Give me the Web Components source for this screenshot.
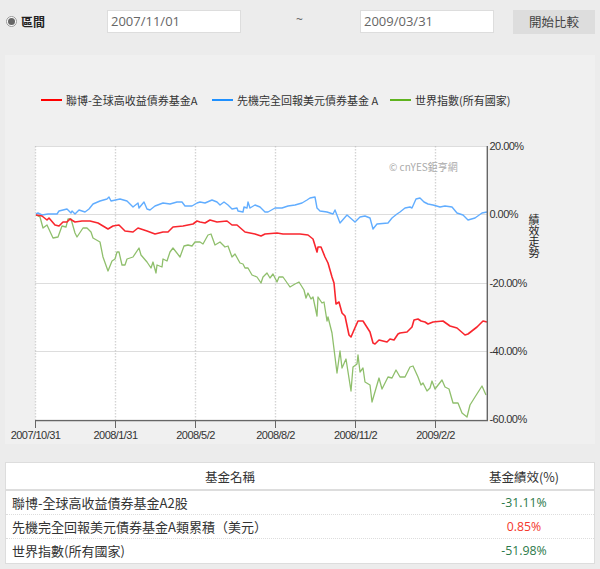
<!DOCTYPE html>
<html lang="zh-Hant"><head><meta charset="utf-8"><style>
html,body{margin:0;padding:0;background:#ececec;height:569px;overflow:hidden}
body{font-family:"Noto Sans CJK TC","Noto Sans",sans-serif;color:#333}
</style></head><body>
<fund-compare></fund-compare>
<script>
const FONT='"Open Sans","Noto Sans CJK TC",sans-serif';
class RangeBar extends HTMLElement{constructor(){super();this.attachShadow({mode:'open'}).innerHTML=`<style>
:host{display:grid;grid-template-columns:100px 136px 1fr 136px 101px;height:24px;padding:10px 5px 21px 5px;align-items:center;font:13px ${FONT};color:#666}
.r{display:flex;align-items:center;gap:4px;align-self:start;padding-top:3px;color:#222;font:bold 12px "Noto Sans CJK TC",sans-serif}
.dot{box-sizing:border-box;width:11px;height:11px;border-radius:50%;border:1px solid #999;background:#fff;display:flex;align-items:center;justify-content:center;margin-left:1px}
.dot i{width:7px;height:7px;border-radius:50%;background:#666}
.in{box-sizing:border-box;height:23px;width:134px;margin-left:2px;background:#fff;border:1px solid #ddd;padding-left:3px;line-height:21px;align-self:start}
.t{text-align:center;font-size:12px;align-self:start;line-height:20px}
.b{box-sizing:border-box;height:24px;width:82px;margin-left:19px;background:#ddd;text-align:center;font:12.5px/24px "Noto Sans CJK TC",sans-serif;color:#444}
</style><div class="r"><span class="dot"><i></i></span>區間</div><div class="in">2007/11/01</div><div class="t">~</div><div class="in">2009/03/31</div><div class="b">開始比較</div>`}}
customElements.define('range-bar',RangeBar);

class ChartLegend extends HTMLElement{constructor(){super();this.attachShadow({mode:'open'}).innerHTML=`<style>
:host{display:flex;align-items:center;height:16px;padding:37px 0 0 36px;font:11px/16px "Noto Sans CJK TC",sans-serif;color:#333;white-space:nowrap}
i{display:block;width:21px;height:1.5px;margin-right:4px}
span{display:block}
</style><i style="background:#f00"></i><span style="width:146px">聯博-全球高收益債券基金A</span><i style="background:#1e90ff"></i><span style="width:153px">先機完全回報美元債券基金 A</span><i style="background:#5fb31e"></i><span>世界指數(所有國家)</span>`}}
customElements.define('chart-legend',ChartLegend);

const BLUE="36,214 38,213 42,215 48,214 57,214 59,211 67,209 71,213 72,211 75,214 79,210 85,212 89,209 93,204 100,201 107,199 109,197 111,201 120,199 127,201 133,207 138,203 139,208 144,202 147,209 150,210 155,206 163,203 170,204 177,202 182,202 185,206 192,206 197,203 200,202 205,203 212,200 217,202 220,205 224,202 228,205 232,209 237,208 238,211 243,212 244,207 247,208 248,202 250,208 255,205 260,207 265,212 268,212 275,208 282,208 288,206 295,205 302,203 307,200 310,198 315,197 317,208 320,211 327,212 333,214 335,210 340,223 347,215 355,222 360,217 365,216 370,218 373,229 377,224 388,223 392,218 397,214 400,212 405,208 410,207 412,208 416,199 420,198 424,202 428,204 433,205 440,207 445,206 452,207 457,213 463,215 468,220 475,218 482,213 487,212";
const RED="36,215 42,216 47,220 49,218 55,225 59,226 63,222 67,222 70,219 75,222 82,221 90,221 98,223 108,229 113,226 119,225 125,231 133,232 138,228 147,231 155,234 163,232 168,232 173,227 183,226 193,224 197,221 200,222 205,223 210,220 217,222 227,221 232,225 237,225 245,232 250,233 255,234 261,236 265,234 277,233 283,234 300,234 308,235 313,239 317,252 318,247 321,247 325,257 328,263 332,277 334,283 336,304 339,302 342,313 345,316 349,335 351,337 354,330 358,321 363,321 370,332 373,343 375,344 379,340 387,342 390,339 394,340 398,334 400,333 407,332 412,327 414,320 418,319 421,321 425,322 428,324 433,322 443,321 450,326 457,328 465,335 468,334 477,327 483,321 487,322";
const GREEN="36,215 40,217 43,228 47,225 53,238 58,237 62,226 66,227 68,219 71,219 75,233 77,237 83,228 87,228 91,232 93,238 100,242 103,257 108,271 112,261 115,259 117,252 119,252 122,265 125,265 127,259 133,257 139,248 141,255 147,262 151,268 153,262 156,273 157,265 162,267 163,259 167,261 170,252 173,248 180,257 184,246 188,245 192,246 195,242 200,242 203,244 208,235 211,234 215,245 220,242 225,247 228,246 232,257 235,254 240,263 243,264 245,268 248,268 252,275 257,277 261,283 263,277 267,273 270,278 273,274 277,282 279,277 283,277 290,287 295,284 299,282 304,290 306,298 308,293 311,299 313,297 317,316 318,297 322,303 324,302 327,321 328,317 332,333 337,373 340,351 342,368 346,359 351,391 353,367 357,364 358,355 360,372 363,368 365,382 370,385 372,402 379,378 382,389 388,377 392,378 396,370 400,377 405,377 410,367 413,366 418,377 421,385 423,383 427,391 430,388 432,381 435,389 442,380 445,387 449,389 453,403 458,403 462,413 467,417 470,405 475,397 482,386 486,395";

class TrendChart extends HTMLElement{constructor(){super();
const xs=[35.5,115.5,195.5,275.5,355.5,435.5], ys=[146.5,214.5,283.5,351.5,420];
const xl=['2007/10/31','2008/1/31','2008/5/2','2008/8/2','2008/11/2','2009/2/2'];
const yl=['20.00%','0.00%','-20.00%','-40.00%','-60.00%'];
let s='';
s+=`<rect x="35.5" y="146" width="452" height="274.5" fill="#fff"/>`;
xs.forEach(x=>s+=`<line x1="${x}" x2="${x}" y1="146" y2="420" class="v"/>`);
ys.forEach(y=>s+=`<line x1="35.5" x2="487" y1="${y}" y2="${y}" class="g"/>`);
s+=`<text x="389" y="171" class="w">© cnYES鉅亨網</text>`;
[['#61adff',BLUE,1.4],['#8fbf6c',GREEN,1.3],['#f9262e',RED,1.6]].forEach(([c,p,w])=>s+=`<polyline points="${p}" fill="none" stroke="${c}" stroke-width="${w}" stroke-linejoin="round"/>`);
s+=`<path d="M487.3 146V420.6H35" fill="none" stroke="#666" stroke-width="1.4"/>`;
xs.forEach(x=>s+=`<line x1="${x}" x2="${x}" y1="420" y2="428" stroke="#666"/>`);
xl.forEach((t,i)=>s+=`<text x="${xs[i]}" y="439" text-anchor="middle" class="a">${t}</text>`);
yl.forEach((t,i)=>s+=`<text x="489.5" y="${ys[i]+3}" class="a">${t}</text>`);
s+=`<text x="534" y="214" class="c">績效走勢</text>`;
this.attachShadow({mode:'open'}).innerHTML=`<style>
:host{display:block;height:336px}
svg{display:block;margin-left:-5px}
.g{stroke:#bbb;stroke-width:1;stroke-dasharray:1 1}
.v{stroke:#d4d4d4;stroke-width:1.4;stroke-dasharray:1.5 1.5}
.a{font:11px "Liberation Sans",sans-serif;letter-spacing:-.55px;fill:#333}
.w{font:10px "Noto Sans CJK TC",sans-serif;fill:#aaa}
.c{font:11px "Noto Sans CJK TC",sans-serif;fill:#222;writing-mode:vertical-rl;text-orientation:upright}
</style><svg width="600" height="336" viewBox="0 108 600 336">${s}</svg>`}}
customElements.define('trend-chart',TrendChart);

class ChartPanel extends HTMLElement{constructor(){super();this.attachShadow({mode:'open'}).innerHTML=`<style>
:host{display:block;margin:0 5px;height:389px;background:#f0f0f0}
</style><slot></slot>`}}
customElements.define('chart-panel',ChartPanel);

class FundRow extends HTMLElement{constructor(){super();this.attachShadow({mode:'open'}).innerHTML=`<style>
:host{display:grid;grid-template-columns:1fr 140px;height:24px;box-sizing:border-box;font:13px/23px "Noto Sans CJK TC",sans-serif;color:#333;border-bottom:1px dotted #ddd;padding-left:6px}
:host([last]){border-bottom:0}
.v{text-align:center;font-family:${FONT};font-size:12.3px}
</style><div><slot></slot></div><div class="v" style="color:${this.getAttribute('color')}">${this.getAttribute('value')}</div>`}}
customElements.define('fund-row',FundRow);

class FundTable extends HTMLElement{constructor(){super();this.attachShadow({mode:'open'}).innerHTML=`<style>
:host{display:block;box-sizing:border-box;margin:18px 5px 0;height:102px;background:#fff;border:1px solid #ddd}
.h{display:grid;grid-template-columns:1fr 140px;height:26px;border-bottom:2px solid #ddd;font:12.5px/28px "Noto Sans CJK TC",sans-serif;color:#333;text-align:center}
</style><div class="h"><div>基金名稱</div><div>基金績效(%)</div></div><slot></slot>`}}
customElements.define('fund-table',FundTable);

class FundCompare extends HTMLElement{constructor(){super();this.attachShadow({mode:'open'}).innerHTML=`<style>:host{display:block;width:600px}</style>
<range-bar></range-bar>
<chart-panel><chart-legend></chart-legend><trend-chart></trend-chart></chart-panel>
<fund-table>
<fund-row value="-31.11%" color="#2c7a4a">聯博-全球高收益債券基金A2股</fund-row>
<fund-row value="0.85%" color="#f4372c">先機完全回報美元債券基金A類累積（美元）</fund-row>
<fund-row value="-51.98%" color="#2c7a4a" last>世界指數(所有國家)</fund-row>
</fund-table>`}}
customElements.define('fund-compare',FundCompare);
</script></body></html>
